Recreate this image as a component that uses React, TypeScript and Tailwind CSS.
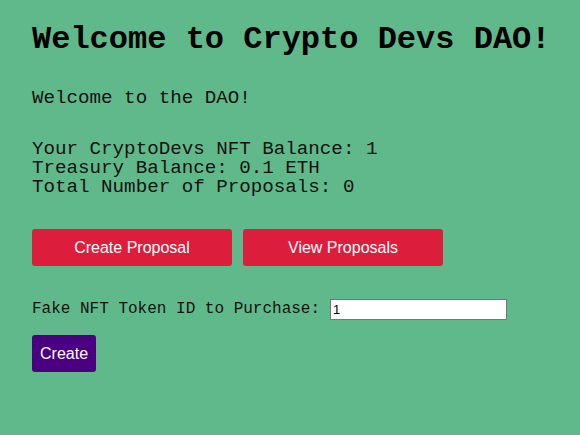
export default function App() {
  const mono = { fontFamily: '"Liberation Mono", "Courier New", monospace' };
  return (
    <div className="min-h-[435px] w-[580px] bg-[#60b98a] pl-8 pt-[20px]" style={mono}>
      <h1 className="text-[32px] font-bold leading-[40px] text-black">Welcome to Crypto Devs DAO!</h1>
      <div className="mt-[29px] text-[19.2px] leading-[19px] text-[#111]">Welcome to the DAO!</div>
      <div className="mt-[32px] text-[19.2px] leading-[19px] text-[#111]">
        <div>Your CryptoDevs NFT Balance: 1</div>
        <div>Treasury Balance: 0.1 ETH</div>
        <div>Total Number of Proposals: 0</div>
      </div>
      <div className="mt-[32px] flex gap-[11px]" style={{ fontFamily: '"Liberation Sans", Arial, sans-serif' }}>
        <button className="h-[37px] w-[200px] rounded-[3px] bg-[#dc1d3c] text-[16px] text-white">Create Proposal</button>
        <button className="h-[37px] w-[200px] rounded-[3px] bg-[#dc1d3c] text-[16px] text-white">View Proposals</button>
      </div>
      <div className="mt-[31px] flex items-center gap-[10px]">
        <label className="text-[16px] text-[#111]">Fake NFT Token ID to Purchase:</label>
        <input
          defaultValue="1"
          className="h-[21px] w-[177px] border border-[#767676] bg-white px-[2px] text-[13px] text-black"
          style={{ fontFamily: '"Liberation Sans", Arial, sans-serif' }}
        />
      </div>
      <button
        className="mt-[14px] h-[37px] rounded-[3px] bg-[#4b0082] px-[8px] text-[16px] text-white"
        style={{ fontFamily: '"Liberation Sans", Arial, sans-serif' }}
      >
        Create
      </button>
    </div>
  );
}
